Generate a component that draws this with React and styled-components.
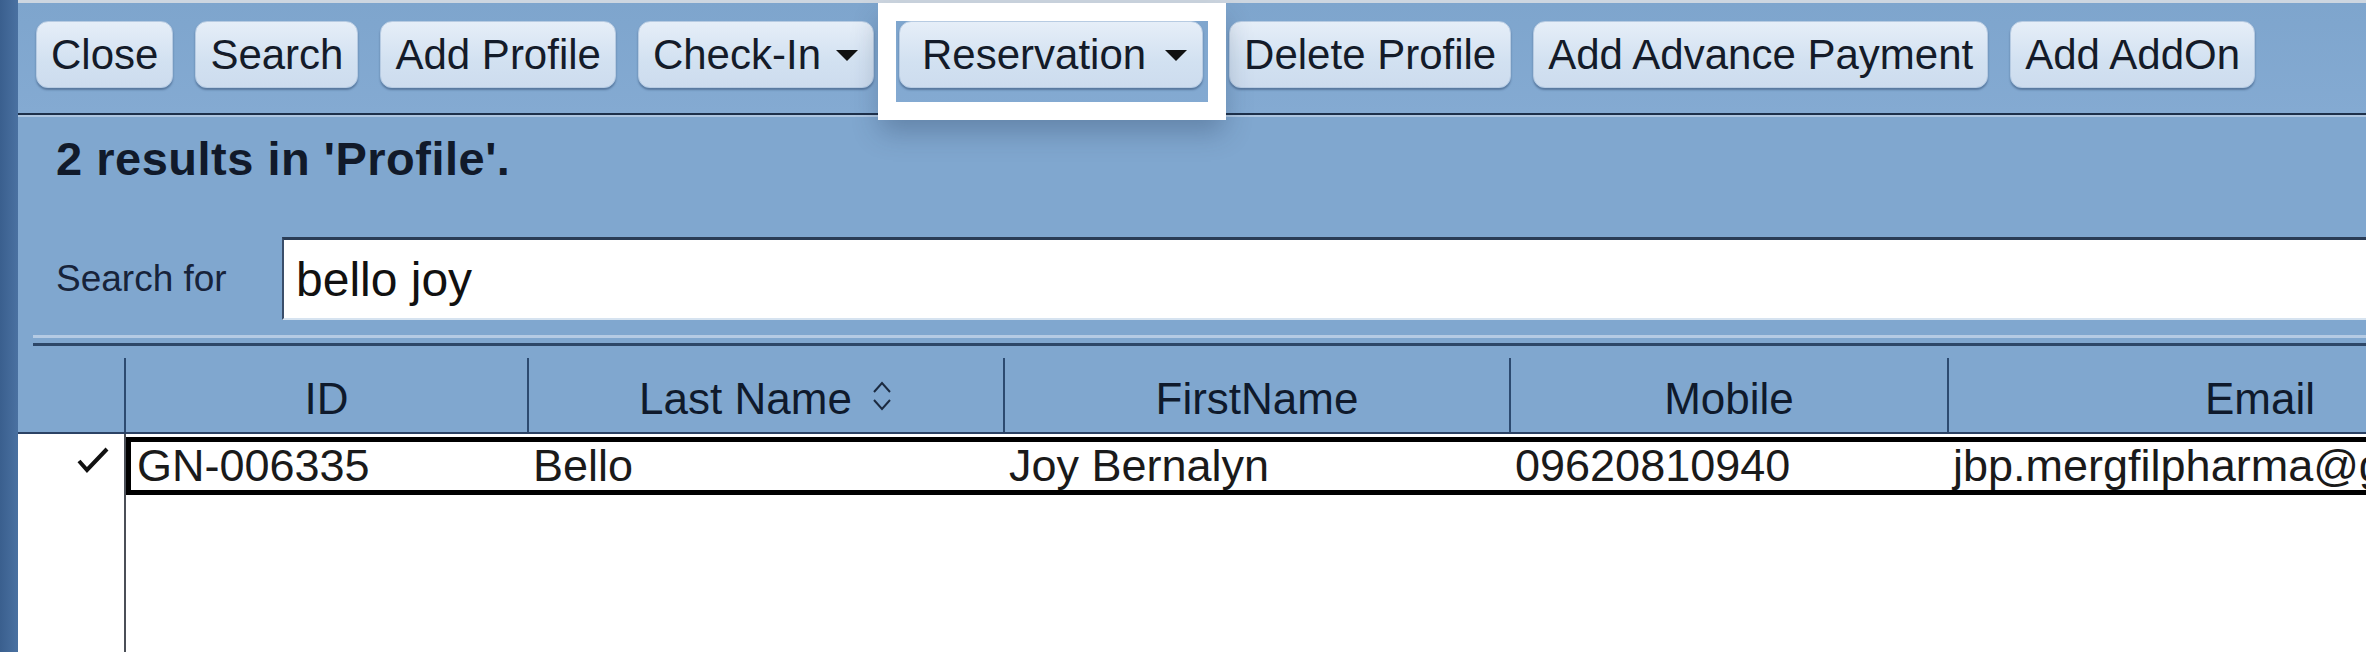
import React from 'react';
import styled, { createGlobalStyle } from 'styled-components';

const UI_FONT = '"Liberation Sans", Arial, sans-serif';

const columns = [
  { key: 'id', label: 'ID', width: 403 },
  { key: 'last', label: 'Last Name', width: 476, sortable: true },
  { key: 'first', label: 'FirstName', width: 506 },
  { key: 'mobile', label: 'Mobile', width: 438 },
  { key: 'email', label: 'Email', width: 624 },
];

const rows = [
  {
    id: 'GN-006335',
    last: 'Bello',
    first: 'Joy Bernalyn',
    mobile: '09620810940',
    email: 'jbp.mergfilpharma@gmail.com',
    selected: true,
  },
];

const actions = [
  { label: 'Close' },
  { label: 'Search' },
  { label: 'Add Profile' },
  { label: 'Check-In', menu: true },
  { label: 'Reservation', menu: true, highlighted: true },
  { label: 'Delete Profile' },
  { label: 'Add Advance Payment' },
  { label: 'Add AddOn' },
];

const Caret = () => (
  <svg width="24" height="13" viewBox="0 0 24 13">
    <path d="M1 1 L23 1 L12 12 Z" fill="#111" />
  </svg>
);

const SortGlyph = () => (
  <svg width="22" height="34" viewBox="0 0 22 34">
    <path d="M3 13 L11 4 L19 13" fill="none" stroke="#1b2a40" strokeWidth="2" />
    <path d="M3 21 L11 30 L19 21" fill="none" stroke="#1b2a40" strokeWidth="2" />
  </svg>
);

const CheckGlyph = () => (
  <svg width="34" height="28" viewBox="0 0 34 28">
    <path d="M3 15 L11 24 L31 3" fill="none" stroke="#111" strokeWidth="4" strokeLinejoin="miter" />
  </svg>
);

const App = () => {
  return (
    <>
      <GlobalStyle />
      <Window>
        <SideStrip />
        <Main>
          <Toolbar>
            {
              actions.map(({ label, menu, highlighted }) => {
                const button = (
                  <ToolButton key={ label } wide={ highlighted }>
                    { label }
                    { menu && <Caret /> }
                  </ToolButton>
                );
                return highlighted
                  ? <Highlight key={ label }>{ button }</Highlight>
                  : button;
              })
            }
          </Toolbar>
          <Separator />
          <InfoPanel>
            <ResultText>2 results in 'Profile'.</ResultText>
            <SearchRow>
              <SearchLabel>Search for</SearchLabel>
              <SearchInput readOnly value="bello joy" />
            </SearchRow>
          </InfoPanel>
          <GridRule />
          <HeaderRow>
            <RowHeaderCorner />
            {
              columns.map(col => (
                <HeaderCell key={ col.key } width={ col.width }>
                  <span>{ col.label }</span>
                  { col.sortable && <SortGlyph /> }
                </HeaderCell>
              ))
            }
          </HeaderRow>
          <Body>
            <RowHeaders>
              {
                rows.map(row => (
                  <RowMarker key={ row.id }>
                    { row.selected && <CheckGlyph /> }
                  </RowMarker>
                ))
              }
            </RowHeaders>
            <Rows>
              {
                rows.map(row => (
                  <DataRow key={ row.id } selected={ row.selected }>
                    {
                      columns.map((col, i) => (
                        <DataCell
                          key={ col.key }
                          width={ i === 0 ? col.width - 7 : col.width }
                        >{ row[col.key] }</DataCell>
                      ))
                    }
                  </DataRow>
                ))
              }
            </Rows>
          </Body>
        </Main>
      </Window>
    </>
  );
};

export default App;

const GlobalStyle = createGlobalStyle`
  html, body {
    margin: 0;
    padding: 0;
  }

  body {
    width: 2366px;
    height: 652px;
    overflow: hidden;
    background: #ffffff;
    font-family: ${ UI_FONT };
  }
`;

const Window = styled.div`
  display: flex;
  width: 2366px;
  height: 652px;
  overflow: hidden;
`;

const SideStrip = styled.div`
  flex: none;
  width: 18px;
  background: linear-gradient(to right, #3a5f8e, #4a71a1);
`;

const Main = styled.div`
  flex: 1;
  min-width: 0;
  display: flex;
  flex-direction: column;
  background: #80a7cf;
  overflow: hidden;
`;

const Toolbar = styled.div`
  box-sizing: border-box;
  height: 113px;
  border-top: 3px solid #cdd6e0;
  padding: 18px 0 0 18px;
  display: flex;
  align-items: flex-start;
  gap: 22px;
  background: linear-gradient(#7ea5cd, #84aad2);
`;

const ToolButton = styled.div`
  box-sizing: border-box;
  height: 67px;
  padding: 0 14px 0 ${ p => p.wide ? 22 : 14 }px;
  display: flex;
  align-items: center;
  gap: ${ p => p.wide ? 18 : 14 }px;
  white-space: nowrap;
  font-size: 42px;
  color: #141b29;
  background: linear-gradient(#e6eef8, #d2e1f1 60%, #cddcee);
  border: 1px solid #b7cbe2;
  border-radius: 12px;
  box-shadow: 0 2px 2px rgba(35, 60, 95, 0.45);

  svg {
    margin-top: 2px;
  }
`;

const Highlight = styled.div`
  position: relative;
  z-index: 2;
  display: flex;
  margin: 0 4px 0 3px;

  &::after {
    content: '';
    position: absolute;
    left: -3px;
    right: -5px;
    top: 0;
    bottom: -14px;
    pointer-events: none;
    box-shadow: 0 0 0 18px #ffffff, 0 14px 26px 16px rgba(30, 50, 80, 0.3);
  }
`;

const Separator = styled.div`
  height: 0;
  border-top: 2px solid #1d304a;
  border-bottom: 2px solid #aec6e0;
`;

const InfoPanel = styled.div`
  padding: 19px 0 15px 38px;
  display: flex;
  flex-direction: column;
`;

const ResultText = styled.div`
  font-size: 47px;
  line-height: 46px;
  font-weight: bold;
  letter-spacing: 0.5px;
  color: #111a2a;
`;

const SearchRow = styled.div`
  margin-top: 55px;
  display: flex;
  align-items: center;
`;

const SearchLabel = styled.div`
  flex: none;
  width: 226px;
  font-size: 37px;
  color: #17233a;
`;

const SearchInput = styled.input`
  flex: 1;
  box-sizing: border-box;
  height: 83px;
  margin-right: -20px;
  padding: 0 12px;
  background: #ffffff;
  border: none;
  border-top: 3px solid #2a3c55;
  border-left: 2px solid #3a4e6a;
  border-bottom: 2px solid #d6e3f0;
  outline: none;
  font-family: ${ UI_FONT };
  font-size: 48px;
  color: #111111;
`;

const GridRule = styled.div`
  height: 5px;
  margin-left: 15px;
  border-top: 3px solid #b5cbe4;
  border-bottom: 3px solid #2d4768;
`;

const HeaderRow = styled.div`
  flex: none;
  display: flex;
  align-items: flex-end;
  height: 86px;
  border-bottom: 2px solid #2b4264;
`;

const RowHeaderCorner = styled.div`
  flex: none;
  width: 106px;
`;

const HeaderCell = styled.div`
  flex: none;
  box-sizing: border-box;
  width: ${ p => p.width }px;
  height: 74px;
  padding-top: 8px;
  border-left: 2px solid #2c4a70;
  display: flex;
  align-items: center;
  justify-content: center;
  gap: 19px;
  font-size: 44px;
  color: #0f1a2c;
  white-space: nowrap;

  svg {
    margin-top: -6px;
  }
`;

const Body = styled.div`
  flex: 1;
  display: flex;
  background: #ffffff;
`;

const RowHeaders = styled.div`
  flex: none;
  box-sizing: border-box;
  width: 108px;
  padding-top: 3px;
  border-right: 2px solid #4b4f57;
`;

const RowMarker = styled.div`
  height: 58px;
  display: flex;
  align-items: center;
  justify-content: flex-end;
  padding-right: 14px;

  svg {
    margin-top: -12px;
  }
`;

const Rows = styled.div`
  flex: 1;
  min-width: 0;
  padding-top: 3px;
`;

const DataRow = styled.div`
  box-sizing: border-box;
  display: flex;
  height: 58px;
  border: 5px solid ${ p => p.selected ? '#000000' : 'transparent' };
  border-right: none;
  background: #ffffff;
`;

const DataCell = styled.div`
  flex: none;
  box-sizing: border-box;
  width: ${ p => p.width }px;
  padding: 0 6px;
  display: flex;
  align-items: center;
  font-size: 45px;
  line-height: 46px;
  color: #1a1a1a;
  white-space: nowrap;
`;
